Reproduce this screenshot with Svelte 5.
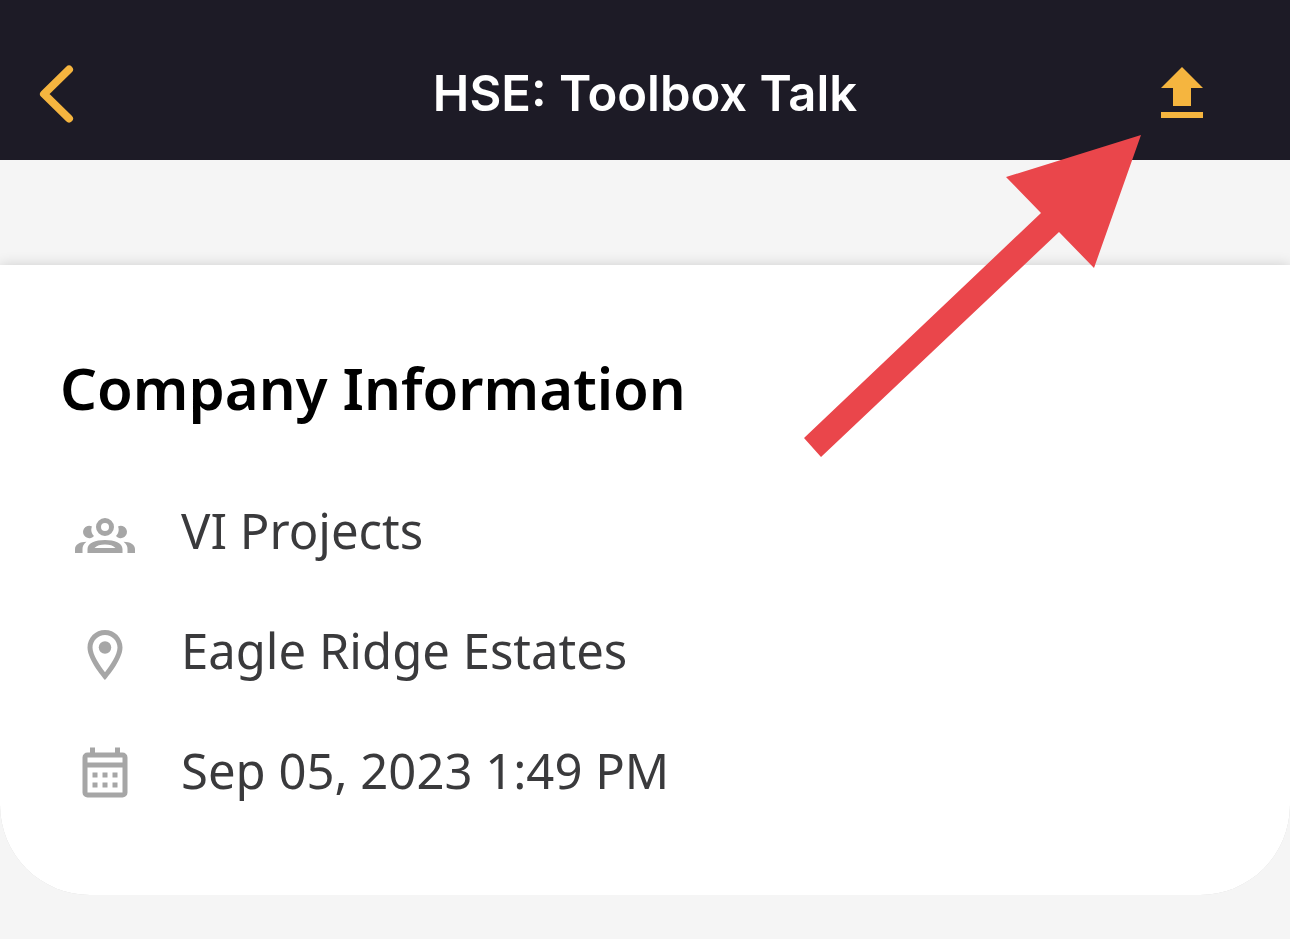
<script>
  let title = 'HSE: Toolbox Talk'
  let company = 'VI Projects'
  let site = 'Eagle Ridge Estates'
  let date = 'Sep 05, 2023 1:49 PM'
</script>

<style>
  :global(body) {
    margin: 0;
    background: #f5f5f5;
  }

  .screen {
    position: relative;
    font-family: 'Noto Sans', sans-serif;
  }

  .bar {
    display: flex;
    align-items: center;
    justify-content: space-between;
    box-sizing: border-box;
    height: 160px;
    padding: 28px 78px 0 26px;
    background: #1d1b26;
  }

  .bar h1 {
    margin: 0;
    color: #fff;
    font: 600 49px/60px Inter, sans-serif;
  }

  .bar button {
    display: flex;
    padding: 0;
    border: none;
    background: none;
    color: #f5b53f;
    cursor: pointer;
  }

  .back {
    margin-right: 52px;
  }

  .card {
    margin-top: 105px;
    padding: 88px 60px 63px;
    border-radius: 0 0 90px 90px;
    background: #fff;
    box-shadow: 0 0 14px rgba(0, 0, 0, .16);
    /* keep only the shadow along the top edge */
    clip-path: inset(-20px 0 0 0 round 0 0 90px 90px);
  }

  .card h2 {
    margin: 0;
    color: #000;
    font-size: 58px;
    font-weight: 600;
    line-height: 70px;
  }

  ul {
    margin: 49px 0 0;
    padding: 0;
    list-style: none;
  }

  li {
    display: flex;
    align-items: center;
    gap: 46px;
    height: 120px;
    padding-left: 15px;
    color: #3a3a3c;
    font-size: 49px;
  }

  li svg {
    flex: none;
    margin-top: 6px;
    color: #a6a6a6;
  }

  li span {
    margin-bottom: 4px;
  }

  .pointer {
    position: absolute;
    top: 135px;
    right: 149px;
    pointer-events: none;
  }
</style>

<div class="screen">
  <header class="bar">
    <button class="back" aria-label="Back">
      <svg width="60" height="60" viewBox="0 0 60 60" fill="none" stroke="currentColor" stroke-width="8" stroke-linecap="round" stroke-linejoin="round">
        <path d="M43 5.500 18 30l25 24.500" />
      </svg>
    </button>
    <h1>{title}</h1>
    <button aria-label="Upload">
      <svg width="60" height="60" viewBox="0 0 60 60" fill="currentColor">
        <path d="M30 3 51 24H39v18H21V24H9zM9 48h42v6H9z" />
      </svg>
    </button>
  </header>

  <section class="card">
    <h2>Company Information</h2>
    <ul>
      <li>
        <svg width="60" height="60" viewBox="0 0 60 60" fill="currentColor">
          <path fill-rule="evenodd" d="M30 13a9 9 0 1 0 0 18 9 9 0 0 0 0-18zm0 5a4 4 0 1 1 0 8 4 4 0 0 1 0-8z" />
          <path d="M17 21.500a6.200 6.200 0 1 0 2 9.500c-2.500-2.500-3.500-6.500-2-9.500zM43 21.500a6.200 6.200 0 1 1-2 9.500c2.500-2.500 3.500-6.500 2-9.500z" />
          <path fill-rule="evenodd" d="M12.500 48v-4c0-6 8-9 17.500-9s17.500 3 17.500 9v4zM19.500 43h21c-2-2.500-6-3.600-10.500-3.600S21.500 40.500 19.500 43z" />
          <path d="M0 48v-4c0-4.500 5-7.300 11.500-7.300C8.500 39 7.500 41 7.500 44v4zM60 48v-4c0-4.500-5-7.300-11.500-7.300 3 2.300 4 4.300 4 7.300v4z" />
        </svg>
        <span>{company}</span>
      </li>
      <li>
        <svg width="60" height="60" viewBox="0 0 24 24" fill="currentColor">
          <path d="M12 2C8.130 2 5 5.130 5 9c0 5.250 7 13 7 13s7-7.750 7-13c0-3.870-3.130-7-7-7zM7 9c0-2.760 2.240-5 5-5s5 2.240 5 5c0 2.880-2.880 7.190-5 9.880C9.920 16.210 7 11.850 7 9z" />
          <circle cx="12" cy="9" r="2.500" />
        </svg>
        <span>{site}</span>
      </li>
      <li>
        <svg width="60" height="60" viewBox="0 0 24 24" fill="currentColor">
          <path fill-rule="evenodd" d="M6 1h2v2h8V1h2v2h1a2 2 0 0 1 2 2v14a2 2 0 0 1-2 2H5a2 2 0 0 1-2-2V5a2 2 0 0 1 2-2h1zM5 5v2h14V5zM5 9v10h14V9z" />
          <path d="M7 11h2v2H7zM11 11h2v2h-2zM15 11h2v2h-2zM7 15h2v2H7zM11 15h2v2h-2zM15 15h2v2h-2z" />
        </svg>
        <span>{date}</span>
      </li>
    </ul>
  </section>

  <svg class="pointer" width="337" height="322" viewBox="0 0 337 322" fill="#ea464b" aria-hidden="true">
    <path d="M337 0 290 133 255 97 17 322 0 303 237 78 202 42z" />
  </svg>
</div>
